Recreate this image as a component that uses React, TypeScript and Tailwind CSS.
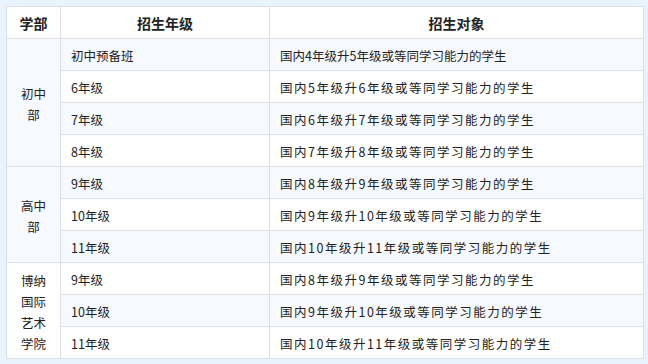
import React from "react";

type Row = { grade: string; target: string };
type Group = { name: string; rows: Row[] };

const groups: Group[] = [
  {
    name: "初中部",
    rows: [
      { grade: "初中预备班", target: "国内4年级升5年级或等同学习能力的学生" },
      { grade: "6年级", target: "国内5年级升6年级或等同学习能力的学生" },
      { grade: "7年级", target: "国内6年级升7年级或等同学习能力的学生" },
      { grade: "8年级", target: "国内7年级升8年级或等同学习能力的学生" },
    ],
  },
  {
    name: "高中部",
    rows: [
      { grade: "9年级", target: "国内8年级升9年级或等同学习能力的学生" },
      { grade: "10年级", target: "国内9年级升10年级或等同学习能力的学生" },
      { grade: "11年级", target: "国内10年级升11年级或等同学习能力的学生" },
    ],
  },
  {
    name: "博纳国际艺术学院",
    rows: [
      { grade: "9年级", target: "国内8年级升9年级或等同学习能力的学生" },
      { grade: "10年级", target: "国内9年级升10年级或等同学习能力的学生" },
      { grade: "11年级", target: "国内10年级升11年级或等同学习能力的学生" },
    ],
  },
];

export default function App() {
  let idx = 0;
  return (
    <div
      className="w-[648px] h-[364px] bg-[#e9f3fd] p-[6px]"
      style={{ fontFamily: '"Noto Sans CJK SC", "Noto Sans", sans-serif' }}
    >
      <table className="w-[637px] table-fixed border-collapse border border-[#dcdfe4] text-[#222]">
        <colgroup>
          <col className="w-[54px]" />
          <col className="w-[209px]" />
          <col className="w-[374px]" />
        </colgroup>
        <thead>
          <tr className="bg-white h-[32px]">
            <th className="border border-[#dcdfe4] text-[14px] font-bold p-0 pt-[2px] text-center">学部</th>
            <th className="border border-[#dcdfe4] text-[14px] font-bold p-0 pt-[2px] text-center">招生年级</th>
            <th className="border border-[#dcdfe4] text-[14px] font-bold p-0 pt-[2px] text-center">招生对象</th>
          </tr>
        </thead>
        <tbody>
          {groups.map((g) =>
            g.rows.map((r, i) => {
              idx += 1;
              const striped = idx % 2 === 1;
              return (
                <tr key={g.name + i} className={`h-[32px] ${striped ? "bg-[#f6f9fe]" : "bg-white"}`}>
                  {i === 0 && (
                    <td
                      rowSpan={g.rows.length}
                      className="border border-[#dcdfe4] text-[12.5px] leading-[21px] text-center px-[10px] pt-[3px]"
                    >
                      {g.name}
                    </td>
                  )}
                  <td className="border border-[#dcdfe4] text-[12.5px] leading-[16px] pl-[10px] pt-[3px]">
                    {r.grade}
                  </td>
                  <td
                    className={`border border-[#dcdfe4] text-[12.5px] leading-[16px] pl-[10px] pt-[3px] whitespace-nowrap ${
                      idx === 1 ? "" : "tracking-[1.5px]"
                    }`}
                  >
                    {r.target}
                  </td>
                </tr>
              );
            })
          )}
        </tbody>
      </table>
    </div>
  );
}
